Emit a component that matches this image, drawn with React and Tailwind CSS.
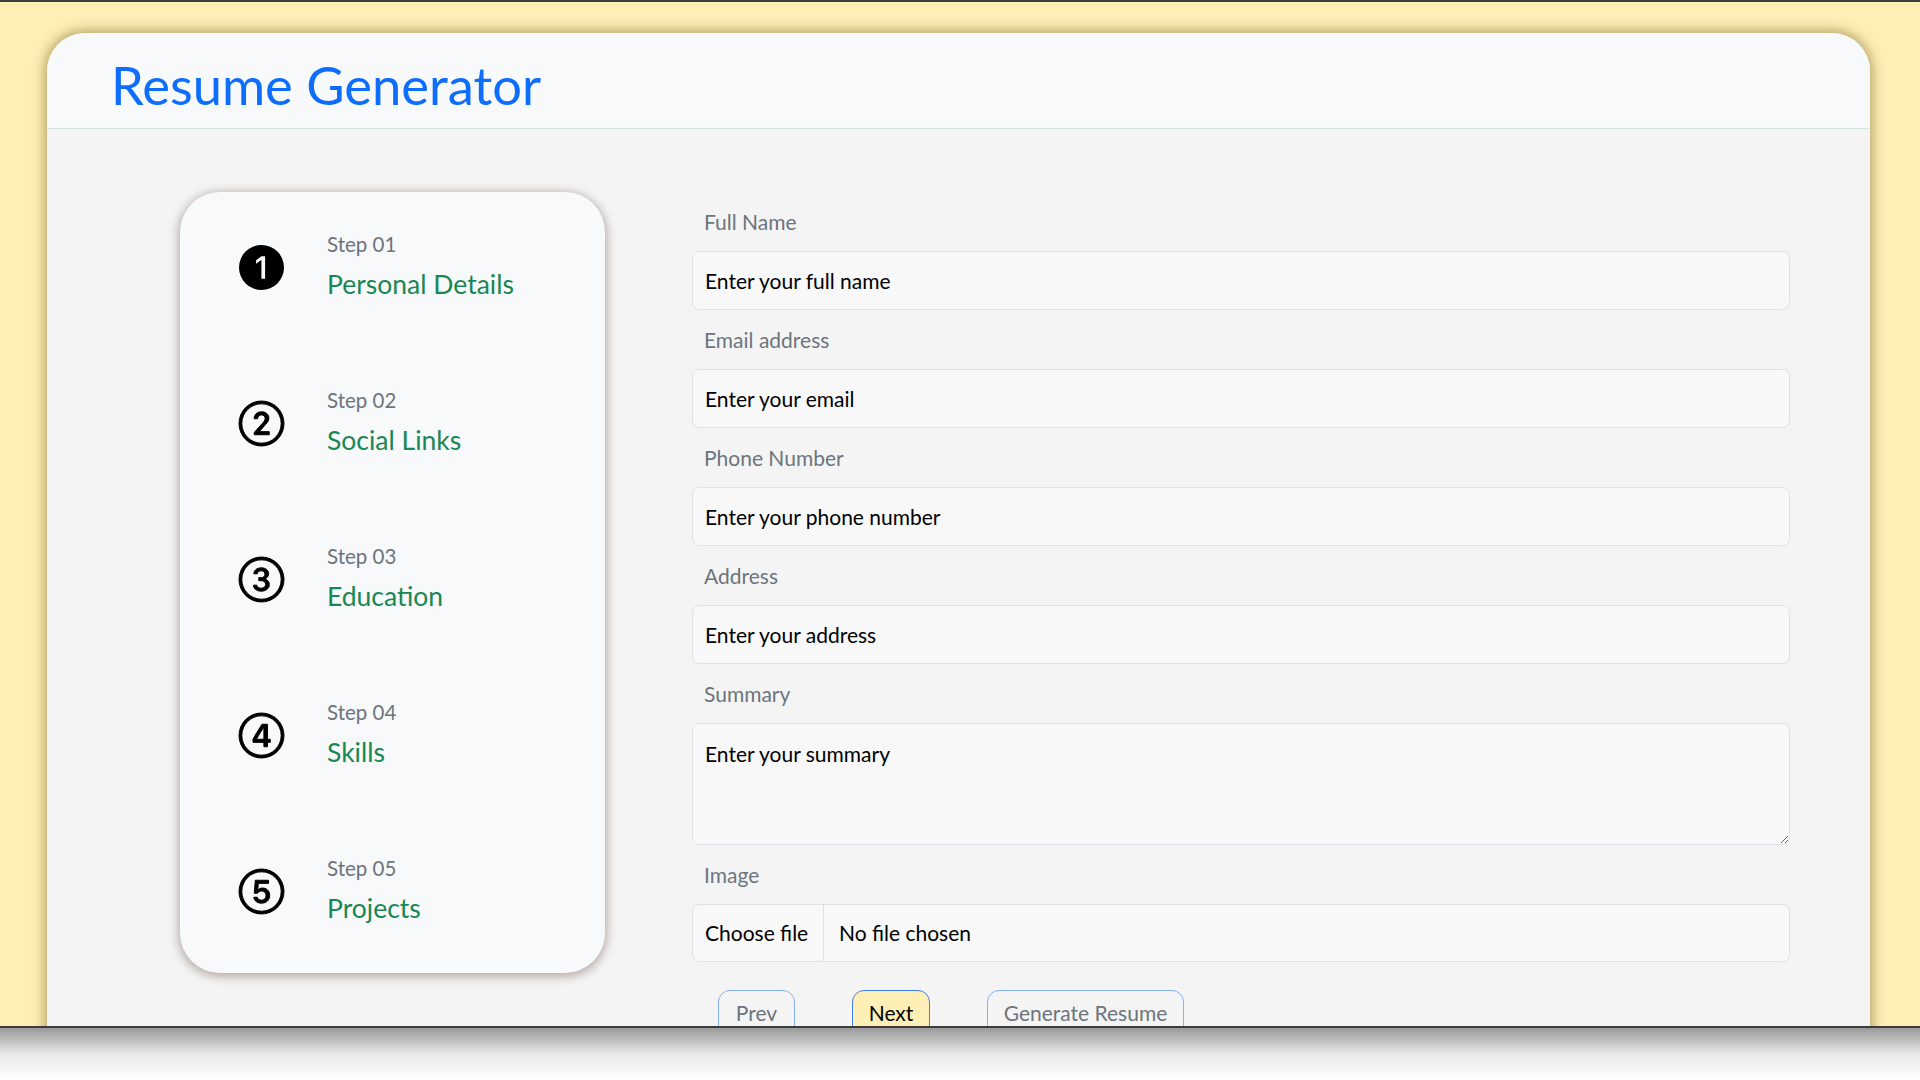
import React from 'react';
import { Bs1CircleFill, Bs2Circle, Bs3Circle, Bs4Circle, Bs5Circle } from 'react-icons/bs';

const steps = [
  { no: '01', title: 'Personal Details', Icon: Bs1CircleFill, filled: true },
  { no: '02', title: 'Social Links', Icon: Bs2Circle },
  { no: '03', title: 'Education', Icon: Bs3Circle },
  { no: '04', title: 'Skills', Icon: Bs4Circle },
  { no: '05', title: 'Projects', Icon: Bs5Circle },
];

const fields = [
  { label: 'Full Name', placeholder: 'Enter your full name', type: 'text' },
  { label: 'Email address', placeholder: 'Enter your email', type: 'email' },
  { label: 'Phone Number', placeholder: 'Enter your phone number', type: 'tel' },
  { label: 'Address', placeholder: 'Enter your address', type: 'text' },
];

const Label = ({ children }) => (
  <label className="block pl-[12px] mb-[17px] text-[21px] leading-[24px] text-[#6c757d]">{children}</label>
);

const App = () => {
  return (
    <div className="w-[1920px] h-[1080px] overflow-hidden bg-white font-['Lato',sans-serif]">
      {/* window area */}
      <div className="h-[1028px] overflow-hidden border-t-2 border-b-2 border-[#3c3c3c] bg-[#feefb6] pl-[47px] pr-[50px] pt-[31px]">
        <div className="h-[1100px] rounded-t-[38px] bg-[#f4f4f4] shadow-[0_0_12px_3px_rgba(120,95,30,0.5)]">
          {/* header */}
          <div className="h-[96px] rounded-t-[38px] bg-[#f8f9fb] border-b border-[#d3e3de] pl-[64px] pt-[26px]">
            <h1 className="text-[52.5px] leading-none text-[#0d6efd]">Resume Generator</h1>
          </div>

          {/* body */}
          <div className="flex pl-[133px] pr-[80px] pt-[63px] gap-[87px]">
            {/* stepper */}
            <div className="w-[425px] h-[781px] shrink-0 rounded-[40px] bg-[#f8f9fa] shadow-[0_2px_10px_2px_rgba(90,70,60,0.4)] pl-[59px] flex flex-col">
              {steps.map(({ no, title, Icon, filled }) => (
                <div key={no} className="h-[156px] pb-[9px] flex items-center">
                  <Icon
                    size={45}
                    className="text-black shrink-0 mt-[3px] overflow-visible"
                    stroke="currentColor"
                    strokeWidth={filled ? 0 : 0.35}
                  />
                  <div className="ml-[43px]">
                    <div className="text-[20.5px] leading-[24px] text-[#6c757d]">Step {no}</div>
                    <div className="mt-[13px] text-[26.5px] leading-[30px] text-[#198754]">{title}</div>
                  </div>
                </div>
              ))}
            </div>

            {/* form */}
            <form className="flex-1 pt-[18px]">
              {fields.map((f) => (
                <div key={f.label} className="mb-[18px]">
                  <Label>{f.label}</Label>
                  <input
                    type={f.type}
                    placeholder={f.placeholder}
                    className="block w-full h-[59px] rounded-[7px] border border-[#dee2e6] bg-[#f8f8f8] px-[12px] text-[21px] text-black placeholder:text-black outline-none"
                  />
                </div>
              ))}

              <div className="mb-[18px]">
                <Label>Summary</Label>
                <textarea
                  placeholder="Enter your summary"
                  className="block w-full h-[122px] rounded-[7px] border border-[#dee2e6] bg-[#f8f8f8] px-[12px] pt-[14px] text-[21px] leading-[31px] text-black placeholder:text-black outline-none resize-y"
                />
              </div>

              <div>
                <Label>Image</Label>
                <div className="flex items-center h-[58px] rounded-[7px] border border-[#dee2e6] bg-[#f8f8f8] text-[21px] text-black">
                  <span className="w-[131px] h-full flex items-center pl-[12px] border-r border-[#dee2e6]">Choose file</span>
                  <span className="ml-[15px]">No file chosen</span>
                </div>
              </div>

              <div className="flex items-start gap-[57px] ml-[26px] mt-[28px]">
                <button type="button" className="w-[77px] pt-[6px] pb-[12px] rounded-[12px] border-[1.5px] border-[#86b0f6] text-[21px] leading-[31px] text-[#6c757d] text-center">
                  Prev
                </button>
                <button type="button" className="w-[78px] pt-[6px] pb-[12px] rounded-[12px] border-[1.5px] border-[#3f7df0] bg-[#feefb6] text-[21px] leading-[31px] text-black text-center">
                  Next
                </button>
                <button type="button" className="w-[197px] pt-[6px] pb-[12px] rounded-[12px] border-[1.5px] border-[#86b0f6] text-[21px] leading-[31px] text-[#6c757d] text-center">
                  Generate Resume
                </button>
              </div>
            </form>
          </div>
        </div>
      </div>
      {/* drop shadow under the window */}
      <div className="h-[52px] bg-linear-to-b from-[#9a9a9a] via-[#e8e8e8] to-white" />
    </div>
  );
};

export default App;
